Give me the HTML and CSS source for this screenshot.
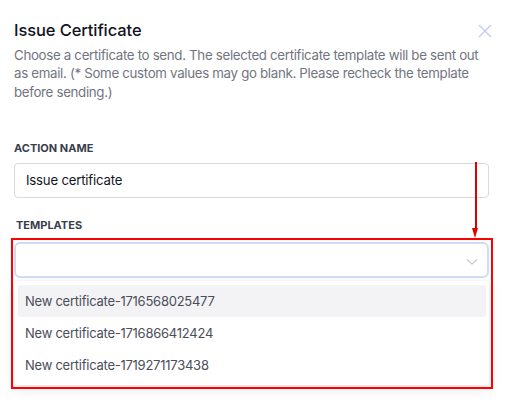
FILE: index.html
```html
<!DOCTYPE html>
<html>
<head>
<meta charset="utf-8">
<link rel="stylesheet" href="styles.css">
</head>
<body>
<div class="modal">
  <div class="header">
    <h1 class="title">Issue Certificate</h1>
    <button class="close" aria-label="Close">
      <svg width="14" height="14" viewBox="0 0 14 14"><path d="M1 1L13 13M13 1L1 13" stroke="#c7cffc" stroke-width="1.6" fill="none"/></svg>
    </button>
  </div>
  <p class="desc">Choose a certificate to send. The selected certificate template will be sent out as email. (* Some custom values may go blank. Please recheck the template before sending.)</p>

  <div class="field first">
    <label class="label">ACTION NAME</label>
    <div class="input">Issue certificate</div>
  </div>

  <div class="field second">
    <label class="label tpl">TEMPLATES</label>
    <div class="select-wrap">
      <div class="select">
        <svg class="chev" width="12" height="8" viewBox="0 0 12 8"><path d="M1 1.5L6 6L11 1.5" stroke="#c4c6cc" stroke-width="1.2" fill="none"/></svg>
      </div>
      <div class="menu">
        <div class="item active">New certificate-1716568025477</div>
        <div class="item">New certificate-1716866412424</div>
        <div class="item">New certificate-1719271173438</div>
      </div>
      <div class="annot-box"></div>
    </div>
  </div>
  <div class="arrow"><div class="shaft"></div><div class="head"></div></div>
</div>
</body>
</html>
```
FILE: styles.css
```css
* { box-sizing: border-box; }
html, body { margin: 0; padding: 0; background: #fff; }
body { font-family: Inter, "Noto Sans", sans-serif; }
.modal { position: relative; width: 510px; height: 415px; padding: 19px 21px 0 14px; }
.header { display: flex; justify-content: space-between; align-items: center; height: 22px; }
.title { margin: 0; font-size: 16.5px; font-weight: 500; color: #111322; letter-spacing: -0.1px; }
.close { border: 0; background: none; padding: 0; width: 14px; height: 14px; margin-top: 2px; margin-right: -3px; display: flex; }
.desc { margin: 5px 0 0; font-size: 13.3px; line-height: 18.4px; color: #727580; width: 475px; letter-spacing: -0.32px; }
.field.first { margin-top: 40px; }
.label { display: block; font-size: 11px; font-weight: 700; color: #393e4c; letter-spacing: 0; line-height: 14px; }
.input { margin-top: 8px; height: 35px; border: 1px solid #d8d9de; border-radius: 4px; padding: 0 11px; font-size: 13.2px; line-height: 33px; color: #14161f; letter-spacing: -0.2px; }
.field.second { margin-top: 20px; }
.label.tpl { padding-left: 2px; }
.select-wrap { position: relative; margin-top: 10px; }
.select { position: relative; height: 36px; border: 2px solid #cfdaf5; border-radius: 6px; background: #fff; }
.chev { position: absolute; right: 9px; top: 14px; }
.menu { margin-top: 3px; border-radius: 4px; background: #fff; padding: 4px 3px 4px 4px; box-shadow: 0 4px 14px rgba(0,0,0,0.10), 0 0 2px rgba(0,0,0,0.08); }
.item { height: 32px; line-height: 32px; padding-left: 7px; font-size: 13px; color: #4a4e5a; border-radius: 3px; letter-spacing: -0.25px; }
.item.active { background: #f3f3f5; }
.annot-box { position: absolute; left: -3px; top: -4px; width: 482px; height: 151px; border: 2px solid #ff0000; pointer-events: none; }
.arrow { position: absolute; left: 472px; top: 162px; width: 7px; height: 76px; }
.shaft { position: absolute; left: 2.5px; top: 0; width: 2px; height: 68px; background: #e00000; }
.head { position: absolute; left: 0; top: 66px; width: 0; height: 0; border-left: 3.5px solid transparent; border-right: 3.5px solid transparent; border-top: 10px solid #e00000; }
```
